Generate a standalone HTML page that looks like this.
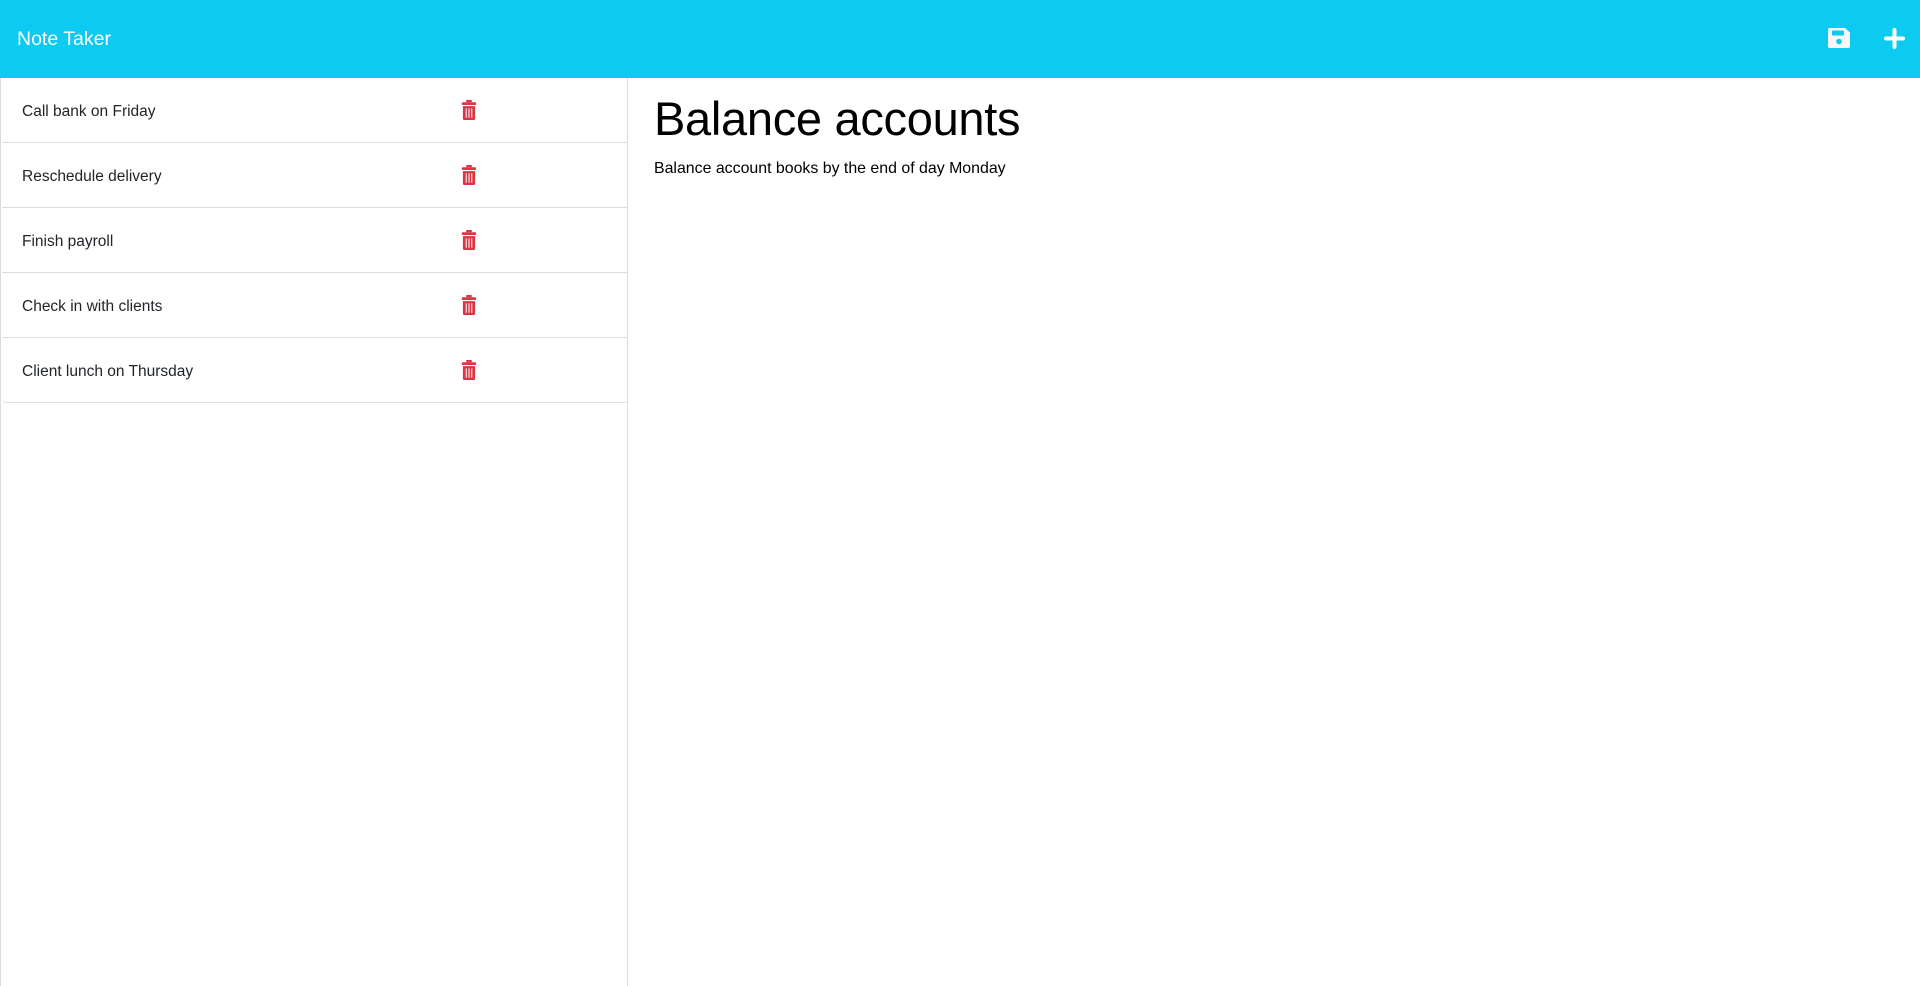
<!DOCTYPE html>
<html><head><style>
*{box-sizing:border-box;margin:0;padding:0}
body{width:1920px;height:986px;overflow:hidden;background:#fff;font-family:"Liberation Sans",sans-serif;color:#212529}
.nav{position:absolute;left:0;top:0;width:1920px;height:78px;background:#0dcaf0}
.brand{position:absolute;left:17px;top:28px;font-size:19.5px;color:#fff}
.side{position:absolute;left:0;top:78px;width:628px;height:908px;border-right:1px solid #dcdcdc;border-left:1px solid #dcdcdc}
.list{position:absolute;left:1px;top:0;width:626px;border-bottom:1px solid #ddd;border-radius:0 0 4px 4px}
.item{position:relative;height:65px;border-top:1px solid #ddd;font-size:15.5px;line-height:68px;padding-left:20px}
.item:first-child{border-top:none;height:64px}
.item svg{position:absolute;left:459px;top:22px}
h1{position:absolute;left:654px;top:91px;font-weight:normal;font-size:47px;color:#000;letter-spacing:-0.3px}
p{position:absolute;left:654px;top:160px;font-size:15.9px;color:#000}
</style></head><body>
<div class="nav"><div class="brand">Note Taker</div>
<svg style="position:absolute;left:1828px;top:28px" width="22" height="20" viewBox="0 0 22 20"><path d="M2 0H17L22 4.5V18a2 2 0 0 1-2 2H2a2 2 0 0 1-2-2V2a2 2 0 0 1 2-2Z" fill="#f5f7fa"/><rect x="4" y="2.5" width="12" height="5" rx="1" fill="#0dcaf0"/><circle cx="11" cy="13.5" r="2.8" fill="#0dcaf0"/></svg>
<svg style="position:absolute;left:1884px;top:28px" width="21" height="21" viewBox="0 0 21 21"><path d="M10.5 2V19M2 10.5H19" stroke="#fff" stroke-width="4" stroke-linecap="round"/></svg>
</div>
<div class="side"><div class="list">
<div class="item">Call bank on Friday<svg width="16" height="20" viewBox="0 0 13 18"><rect x="4" y="0" width="5" height="2" fill="#dc3545"/><rect x="0" y="2" width="13" height="2.5" rx="1" fill="#dc3545"/><path d="M1 5.5H12V16.5a1.5 1.5 0 0 1-1.5 1.5H2.5A1.5 1.5 0 0 1 1 16.5Z" fill="#dc3545"/><path d="M4 7.5V16M6.5 7.5V16M9 7.5V16" stroke="#fff" stroke-width="0.9"/></svg></div>
<div class="item">Reschedule delivery<svg width="16" height="20" viewBox="0 0 13 18"><rect x="4" y="0" width="5" height="2" fill="#dc3545"/><rect x="0" y="2" width="13" height="2.5" rx="1" fill="#dc3545"/><path d="M1 5.5H12V16.5a1.5 1.5 0 0 1-1.5 1.5H2.5A1.5 1.5 0 0 1 1 16.5Z" fill="#dc3545"/><path d="M4 7.5V16M6.5 7.5V16M9 7.5V16" stroke="#fff" stroke-width="0.9"/></svg></div>
<div class="item">Finish payroll<svg width="16" height="20" viewBox="0 0 13 18"><rect x="4" y="0" width="5" height="2" fill="#dc3545"/><rect x="0" y="2" width="13" height="2.5" rx="1" fill="#dc3545"/><path d="M1 5.5H12V16.5a1.5 1.5 0 0 1-1.5 1.5H2.5A1.5 1.5 0 0 1 1 16.5Z" fill="#dc3545"/><path d="M4 7.5V16M6.5 7.5V16M9 7.5V16" stroke="#fff" stroke-width="0.9"/></svg></div>
<div class="item">Check in with clients<svg width="16" height="20" viewBox="0 0 13 18"><rect x="4" y="0" width="5" height="2" fill="#dc3545"/><rect x="0" y="2" width="13" height="2.5" rx="1" fill="#dc3545"/><path d="M1 5.5H12V16.5a1.5 1.5 0 0 1-1.5 1.5H2.5A1.5 1.5 0 0 1 1 16.5Z" fill="#dc3545"/><path d="M4 7.5V16M6.5 7.5V16M9 7.5V16" stroke="#fff" stroke-width="0.9"/></svg></div>
<div class="item">Client lunch on Thursday<svg width="16" height="20" viewBox="0 0 13 18"><rect x="4" y="0" width="5" height="2" fill="#dc3545"/><rect x="0" y="2" width="13" height="2.5" rx="1" fill="#dc3545"/><path d="M1 5.5H12V16.5a1.5 1.5 0 0 1-1.5 1.5H2.5A1.5 1.5 0 0 1 1 16.5Z" fill="#dc3545"/><path d="M4 7.5V16M6.5 7.5V16M9 7.5V16" stroke="#fff" stroke-width="0.9"/></svg></div>
</div></div>
<h1>Balance accounts</h1>
<p>Balance account books by the end of day Monday</p>
</body></html>
